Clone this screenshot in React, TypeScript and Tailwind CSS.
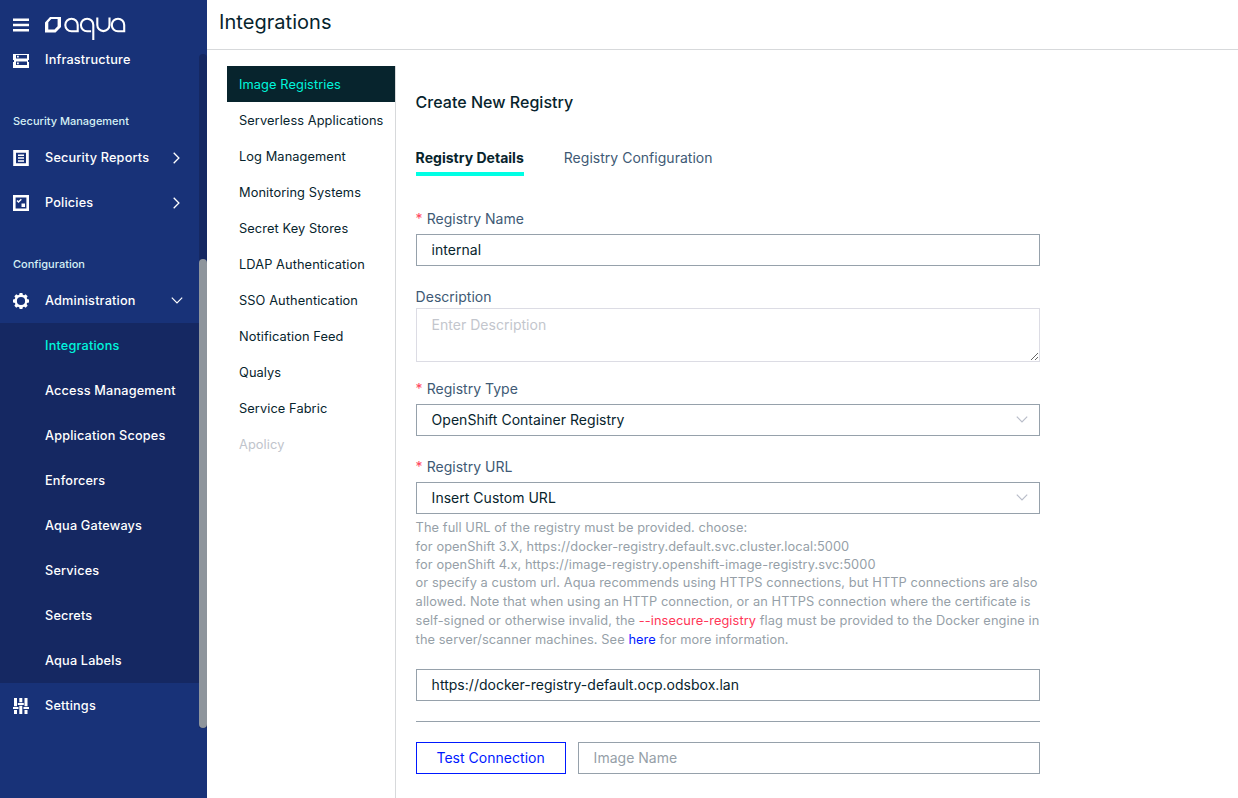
import React from "react";

const ADMIN_ITEMS = [
  "Integrations",
  "Access Management",
  "Application Scopes",
  "Enforcers",
  "Aqua Gateways",
  "Services",
  "Secrets",
  "Aqua Labels",
];

const SECTIONS = [
  "Image Registries",
  "Serverless Applications",
  "Log Management",
  "Monitoring Systems",
  "Secret Key Stores",
  "LDAP Authentication",
  "SSO Authentication",
  "Notification Feed",
  "Qualys",
  "Service Fabric",
  "Apolicy",
];

function AquaLogo() {
  return (
    <svg width="81" height="26" viewBox="0 0 81 26" fill="none" stroke="#fff" strokeWidth="2.1">
      <path fill="#fff" stroke="none" fillRule="evenodd" d="M5 1H16v10L10.500 16.500H0V6.500ZM6.300 3 3.300 6.200V13.500H9.500L12.600 10.300V3Z" />
      <path d="M32 15.200h-5.500a6.200 6.200 0 1 1 6.200-6.200v7.200" />
      <path d="M48.300 24V9a6.200 6.200 0 1 0-6.200 6.200h4" />
      <path d="M52.300 1.500V9a6 6 0 0 0 12.200 0V1.500" />
      <path d="M79.200 16.200V9a6.200 6.200 0 1 0-6.200 6.200h6" />
    </svg>
  );
}

function ServerIcon() {
  return (
    <svg width="16" height="14" viewBox="0 0 16 14" fill="#fff">
      <path fillRule="evenodd" d="M0 0H16V6H15V8H16V14H0V8H1V6H0ZM3 1V4.500H14V1ZM3 7.500V11H14V7.500Z" />
      <path d="M4 1.800h1.800v1.800H4zM4 8.400h1.800v1.800H4z" />
    </svg>
  );
}

function ReportIcon() {
  return (
    <svg width="16" height="16" viewBox="0 0 16 16" fill="none" stroke="#fff">
      <path strokeWidth="2.800" d="M1.600 1.400h12.800v13.200H1.600z" />
      <path strokeWidth="1.500" d="M5 5.300h6M5 8.100h6M5 11h6" />
    </svg>
  );
}

function PolicyIcon() {
  return (
    <svg width="16" height="16" viewBox="0 0 16 16" fill="none" stroke="#fff">
      <path strokeWidth="2.600" d="M1.300 1.300h13.400v13.400H1.300z" />
      <path strokeWidth="1.500" d="m4 5.500 1.500 1.500L8.300 4.200" />
      <path fill="#fff" stroke="none" d="M8.500 8.500H12V12H8.500z" />
    </svg>
  );
}

function GearIcon() {
  return (
    <svg width="16" height="16" viewBox="-8 -8 16 16" fill="none" stroke="#fff">
      <circle r="5.300" strokeWidth="2.400" />
      {[0, 45, 90, 135, 180, 225, 270, 315].map((angle) => (
        <path key={angle} transform={`rotate(${angle})`} fill="#fff" stroke="none" d="M-1.900-5.500-1.400-8H1.400L1.900-5.500Z" />
      ))}
    </svg>
  );
}

function SettingsIcon() {
  return (
    <svg width="16" height="16" viewBox="0 0 16 16" fill="#fff">
      <path d="M1 0h3v8.300H1zM6.300 0h3v4.300h-3zM11.500 0h3v8.300h-3zM4.800 5h6v2h-6zM0 9h5.500v2H0zM10.500 9H16v2h-5.500zM1 12h3v4H1zM6.300 7.800h3V16h-3zM11.500 12h3v4h-3z" />
    </svg>
  );
}

function Chevron({ down = false, className = "" }: { down?: boolean; className?: string }) {
  return down ? (
    <svg width="12" height="7" viewBox="0 0 12 7" fill="none" stroke="currentColor" strokeWidth="1.200" className={className}>
      <path d="m.800.700 5.200 5.200L11.200.700" />
    </svg>
  ) : (
    <svg width="7" height="12" viewBox="0 0 7 12" fill="none" stroke="currentColor" strokeWidth="1.300" className={className}>
      <path d="m.700.800 5.200 5.200L.700 11.200" />
    </svg>
  );
}

function NavRow({ icon, label, arrow }: { icon: React.ReactNode; label: string; arrow?: "right" | "down" }) {
  return (
    <div className="flex h-[45px] items-center pl-[13px] text-white">
      <span className="w-8 shrink-0">{icon}</span>
      <span className="flex-1 pt-px">{label}</span>
      {arrow && (
        <span className="mr-[15.500px] flex w-[14px] justify-center">
          <Chevron down={arrow === "down"} />
        </span>
      )}
    </div>
  );
}

function Sidebar() {
  return (
    <aside className="flex w-[207px] shrink-0 flex-col bg-[#183278] text-[12.700px] font-medium tracking-[0.180px]">
      <div className="flex h-[50px] shrink-0 pl-[13px]">
        <svg width="16" height="14" viewBox="0 0 16 14" className="mt-[18px] fill-white">
          <path d="M0 .500h16v2.500H0zM0 5.700h16v2.500H0zM0 11h16v2.500H0z" />
        </svg>
        <div className="mt-4 ml-4">
          <AquaLogo />
        </div>
      </div>
      <div className="flex h-[678px]">
        <div className="w-[199px] shrink-0">
          <div className="flex h-8 pl-[13px] text-white">
            <span className="mt-1 w-8 shrink-0">
              <ServerIcon />
            </span>
            <span className="leading-[19px]">Infrastructure</span>
          </div>
          <div className="mt-[30px] flex h-[18px] items-center pl-[13px] text-[11px] tracking-normal text-[#d5f0f5]">Security Management</div>
          <div className="mt-[5px]">
            <NavRow icon={<ReportIcon />} label="Security Reports" arrow="right" />
            <NavRow icon={<PolicyIcon />} label="Policies" arrow="right" />
          </div>
          <div className="mt-[30px] flex h-[18px] items-center pl-[13px] text-[11px] tracking-normal text-[#d5f0f5]">Configuration</div>
          <div className="mt-[5px]">
            <NavRow icon={<GearIcon />} label="Administration" arrow="down" />
          </div>
          <div className="bg-[#152862]">
            {ADMIN_ITEMS.map((item, i) => (
              <div key={item} className={`flex h-[45px] items-center pt-px pl-[45px] ${i === 0 ? "text-[#00f5dc]" : "text-white"}`}>
                {item}
              </div>
            ))}
          </div>
          <NavRow icon={<SettingsIcon />} label="Settings" />
        </div>
        <div className="mt-1 flex w-2 flex-col justify-end rounded-t bg-[#152862]">
          <div className="h-[469px] rounded bg-[#8e959c]" />
        </div>
      </div>
    </aside>
  );
}

function Label({ children, required = false }: { children: React.ReactNode; required?: boolean }) {
  return (
    <div className="flex h-5 items-center pb-[2px] text-[#405a75]">
      {required && <span className="mr-1 text-[#ff4560]">*</span>}
      {children}
    </div>
  );
}

function Select({ value }: { value: string }) {
  return (
    <div className="flex h-8 items-center justify-between border border-[#96a1ab] pr-[10.600px] pb-[2px] pl-[15px]">
      {value}
      <Chevron down className="text-[#b9bdc9]" />
    </div>
  );
}

function RegistryForm() {
  return (
    <main className="-ml-[0.4px] w-[624px] text-[14px] tracking-[0.020px]">
      <h2 className="mt-[26px] h-5 text-[16px] leading-5 font-medium">Create New Registry</h2>
      <div className="mt-9 flex h-[28px] gap-10 leading-5">
        <div className="border-b-4 border-[#00ffe4] font-bold">Registry Details</div>
        <div className="text-[#405a75]">Registry Configuration</div>
      </div>
      <div className="mt-[33px]">
        <Label required>Registry Name</Label>
        <input className="mt-[5px] block h-8 w-full border border-[#96a1ab] px-[15px] pb-[2px] outline-none" defaultValue="internal" />
      </div>
      <div className="mt-[21px]">
        <Label>Description</Label>
        <textarea
          className="mt-px block h-[54px] w-full border border-[#dcdce4] px-[15px] py-[6px] leading-5 outline-none placeholder:text-[#c3c6cd]"
          placeholder="Enter Description"
        />
      </div>
      <div className="mt-[17px]">
        <Label required>Registry Type</Label>
        <div className="mt-[5px]">
          <Select value="OpenShift Container Registry" />
        </div>
      </div>
      <div className="mt-[21px]">
        <Label required>Registry URL</Label>
        <div className="mt-[5px]">
          <Select value="Insert Custom URL" />
        </div>
      </div>
      <div className="mt-[5px] h-[130px] text-[12.800px] leading-[18px] tracking-[0.085px] whitespace-nowrap text-[#969fa8]">
        <div className="h-[19px]">The full URL of the registry must be provided. choose:</div>
        <div className="h-[18px]">for openShift 3.X, https://docker-registry.default.svc.cluster.local:5000</div>
        <div className="h-[18px]">for openShift 4.x, https://image-registry.openshift-image-registry.svc:5000</div>
        <div className="h-[19px]">or specify a custom url. Aqua recommends using HTTPS connections, but HTTP connections are also</div>
        <div className="h-[19px]">allowed. Note that when using an HTTP connection, or an HTTPS connection where the certificate is</div>
        <div className="h-[19px]">
          self-signed or otherwise invalid, the <span className="text-[#ff3657]">--insecure-registry</span> flag must be provided to the Docker engine in
        </div>
        <div>
          the server/scanner machines. See <a className="text-[#0019ff]">here</a> for more information.
        </div>
      </div>
      <input
        className="mt-5 block h-8 w-full border border-[#96a1ab] px-[15px] pb-[2px] outline-none"
        defaultValue="https://docker-registry-default.ocp.odsbox.lan"
      />
      <hr className="mt-5 border-[#96a1ab]" />
      <div className="mt-5 flex gap-3">
        <button className="h-8 w-[150px] border border-[#0019ff] pb-[2px] text-[#0019ff]">Test Connection</button>
        <input
          className="h-8 flex-1 border border-[#96a1ab] px-[15px] pb-[2px] outline-none placeholder:text-[#969fa8]"
          placeholder="Image Name"
        />
      </div>
    </main>
  );
}

export default function App() {
  return (
    <div className="flex h-[798px] w-[1238px] overflow-hidden bg-white font-['Inter',sans-serif] text-[#07242d]">
      <Sidebar />
      <div className="flex flex-1 flex-col">
        <header className="flex h-[50px] shrink-0 items-center border-b border-[#d7d9db] pb-[5px] pl-3 text-[20px] tracking-[0.050px]">
          Integrations
        </header>
        <div className="flex flex-1 pt-4 pl-5">
          <nav className="w-[169px] shrink-0 border-r border-[#d7d9db] text-[12.800px] tracking-[0.090px]">
            {SECTIONS.map((item, i) => (
              <div
                key={item}
                className={`flex h-9 items-center pt-[2px] pl-3 whitespace-nowrap ${
                  i === 0 ? "bg-[#07242d] text-[#00f5dc]" : i === SECTIONS.length - 1 ? "text-[#c0c4cc]" : ""
                }`}
              >
                {item}
              </div>
            ))}
          </nav>
          <div className="pl-5">
            <RegistryForm />
          </div>
        </div>
      </div>
    </div>
  );
}
